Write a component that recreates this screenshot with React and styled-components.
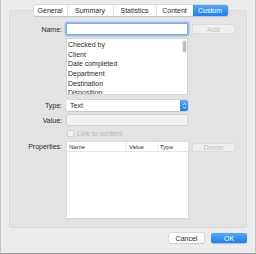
import React from "react";
import styled, { createGlobalStyle } from "styled-components";

const Global = createGlobalStyle`
  html, body { margin: 0; padding: 0; background: #ececec; }
  body { font-family: "Liberation Sans", Arial, sans-serif; }
`;

const Window = styled.div`
  box-sizing: border-box;
  width: 256px;
  height: 254px;
  background: #ececec;
  border: 1px solid #c4c4c4;
  border-top: none;
  border-bottom-color: #9f9f9f;
  display: flex;
  flex-direction: column;
  padding: 5px 8px 0 8px;
  font-size: 7px;
  color: #2a2a2a;
`;

const TabBar = styled.div`
  align-self: center;
  display: flex;
  height: 11px;
  margin-left: 5px;
  margin-bottom: -6px;
  position: relative;
  z-index: 1;
  background: #fff;
  border-radius: 2px;
  box-shadow: 0 0 0 0.5px #c8c8c8, 0 0.5px 1px rgba(0, 0, 0, 0.15);
`;

const Tab = styled.div`
  display: flex;
  align-items: center;
  justify-content: center;
  width: ${(p) => p.$w}px;
  color: ${(p) => (p.$active ? "#fff" : "#2a2a2a")};
  background: ${(p) => (p.$active ? "linear-gradient(#54a7fb, #1c7ff5)" : "transparent")};
  border-radius: ${(p) => (p.$active ? "0 2px 2px 0" : "0")};
  border-left: ${(p) => (p.$first || p.$active ? "none" : "1px solid #dedede")};
`;

const Box = styled.div`
  box-sizing: border-box;
  width: 238px;
  height: 218px;
  background: #e3e3e3;
  border: 1px solid #dadada;
  border-radius: 2px;
  display: flex;
  flex-direction: column;
  padding-top: 11px;
`;

const Row = styled.div`
  display: grid;
  grid-template-columns: 52px 122px 43px;
  column-gap: 4px;
  align-items: ${(p) => p.$align || "center"};
  margin-top: ${(p) => p.$mt || 0}px;
`;

const Label = styled.div`
  text-align: right;
  color: #2a2a2a;
  padding-top: ${(p) => p.$pt || 0}px;
`;

const Input = styled.div`
  box-sizing: border-box;
  height: 12px;
  background: ${(p) => (p.$disabled ? "#f2f2f2" : "#fff")};
  border: 1px solid ${(p) => (p.$focus ? "#7ea9e8" : "#d2d2d2")};
  box-shadow: ${(p) => (p.$focus ? "0 0 0 1.5px #9bbdf0" : "none")};
  border-radius: 1px;
`;

const GhostButton = styled.div`
  box-sizing: border-box;
  height: ${(p) => p.$h || 10}px;
  display: flex;
  align-items: center;
  justify-content: center;
  background: #efefef;
  border: 1px solid #dcdcdc;
  border-radius: 2px;
  color: #c2c2c2;
  margin-top: ${(p) => p.$mt || 0}px;
`;

const List = styled.div`
  position: relative;
  box-sizing: border-box;
  height: 57px;
  background: #fff;
  border: 1px solid #d4d4d4;
  overflow: hidden;
  padding: 1px 0 0 1px;
`;

const ListItem = styled.div`
  height: 9.7px;
  line-height: 9.7px;
  color: #2a2a2a;
`;

const Scroll = styled.div`
  position: absolute;
  right: 1px;
  top: 2px;
  width: 3px;
  height: 11px;
  border-radius: 2px;
  background: #bdbdbd;
  box-shadow: 0 0 0 1px #e6e6e6;
`;

const Select = styled.div`
  box-sizing: border-box;
  height: 11px;
  display: flex;
  align-items: center;
  background: #fff;
  border-radius: 2px;
  box-shadow: 0 0 0 0.5px #cdcdcd, 0 0.5px 1px rgba(0, 0, 0, 0.15);
  padding-left: 4px;
`;

const Stepper = styled.div`
  margin-left: auto;
  width: 8px;
  height: 11px;
  border-radius: 0 2px 2px 0;
  background: linear-gradient(#59abfc, #1b7ff4);
  display: flex;
  align-items: center;
  justify-content: center;
`;

const Check = styled.div`
  display: flex;
  align-items: center;
  gap: 3px;
  color: #b8b8b8;
  height: 8px;
`;

const Box6 = styled.div`
  width: 5px;
  height: 5px;
  background: #f2f2f2;
  border: 1px solid #d2d2d2;
  border-radius: 1px;
  margin-left: 1px;
`;

const Table = styled.div`
  box-sizing: border-box;
  height: 76px;
  background: #fff;
  box-shadow: 0 0 0 0.5px #d6d6d6, 0 1px 1px rgba(0, 0, 0, 0.08);
  margin-left: 1px;
`;

const THead = styled.div`
  display: grid;
  grid-template-columns: 59px 31px 1fr;
  height: 9px;
  border-bottom: 1px solid #e4e4e4;
  font-size: 6px;
  color: #333;
`;

const TH = styled.div`
  display: flex;
  align-items: center;
  padding-left: 2px;
  border-left: ${(p) => (p.$first ? "none" : "1px solid #ececec")};
`;

const Footer = styled.div`
  display: flex;
  justify-content: flex-end;
  gap: 7px;
  margin-top: 5px;
`;

const Button = styled.div`
  box-sizing: border-box;
  width: ${(p) => p.$w}px;
  height: 10px;
  display: flex;
  align-items: center;
  justify-content: center;
  border-radius: 2px;
  background: ${(p) => (p.$primary ? "linear-gradient(#55a8fc, #1a7ef4)" : "#fff")};
  color: ${(p) => (p.$primary ? "#fff" : "#2a2a2a")};
  box-shadow: ${(p) =>
    p.$primary ? "0 0.5px 1px rgba(0,0,0,0.2)" : "0 0 0 0.5px #c9c9c9, 0 0.5px 1px rgba(0,0,0,0.15)"};
`;

const tabs = [
  ["General", 33],
  ["Summary", 45],
  ["Statistics", 42],
  ["Content", 36],
  ["Custom", 35],
];

const items = ["Checked by", "Client", "Date completed", "Department", "Destination", "Disposition"];

export default function App() {
  return (
    <Window>
      <Global />
      <TabBar>
        {tabs.map(([t, w], i) => (
          <Tab key={t} $w={w} $first={i === 0} $active={t === "Custom"}>
            {t}
          </Tab>
        ))}
      </TabBar>
      <Box>
        <Row $mt={1}>
          <Label>Name:</Label>
          <Input $focus />
          <GhostButton $h={10}>Add</GhostButton>
        </Row>
        <Row $mt={3} $align="start">
          <div />
          <List>
            {items.map((t) => (
              <ListItem key={t}>{t}</ListItem>
            ))}
            <Scroll />
          </List>
        </Row>
        <Row $mt={5}>
          <Label>Type:</Label>
          <Select>
            Text
            <Stepper>
              <svg width="5" height="8" viewBox="0 0 5 8">
                <path d="M1 3 L2.5 1.5 L4 3 M1 5 L2.5 6.5 L4 5" stroke="#fff" strokeWidth="0.8" fill="none" />
              </svg>
            </Stepper>
          </Select>
        </Row>
        <Row $mt={3}>
          <Label>Value:</Label>
          <Input $disabled />
        </Row>
        <Row $mt={3}>
          <div />
          <Check>
            <Box6 />
            Link to content
          </Check>
        </Row>
        <Row $mt={5} $align="start">
          <Label $pt={1}>Properties:</Label>
          <Table>
            <THead>
              <TH $first>Name</TH>
              <TH>Value</TH>
              <TH>Type</TH>
            </THead>
          </Table>
          <GhostButton $h={9} $mt={1}>Delete</GhostButton>
        </Row>
      </Box>
      <Footer>
        <Button $w={35}>Cancel</Button>
        <Button $w={36} $primary>OK</Button>
      </Footer>
    </Window>
  );
}
